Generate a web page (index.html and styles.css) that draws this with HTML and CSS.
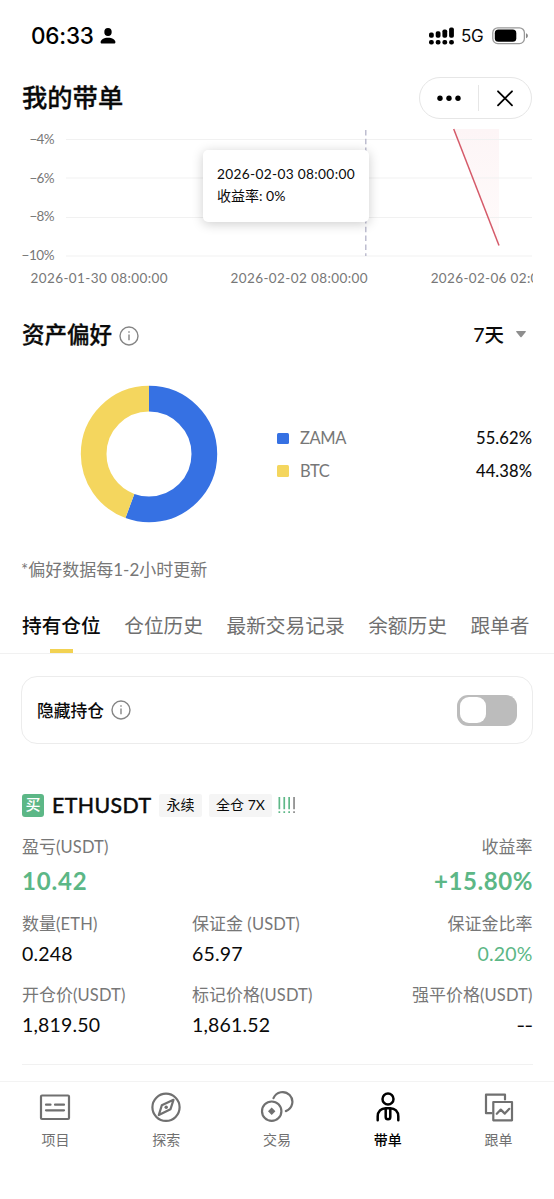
FILE: index.html
```html
<!DOCTYPE html>
<html lang="zh-CN">
<head>
<meta charset="utf-8">
<title>我的带单</title>
<link rel="stylesheet" href="styles.css">
</head>
<body>
<div class="screen">
  <header class="status">
    <span class="time">06:33</span>
    <svg class="person" width="16" height="16" viewBox="0 0 16 16"><ellipse cx="8" cy="4.1" rx="3.7" ry="4"/><path d="M.6 14.2C.6 11.500 3.800 9.700 8 9.700s7.400 1.800 7.400 4.500c0 .8-.5 1.300-1.400 1.300H2C1.100 15.500.6 15 .6 14.200z"/></svg>
    <span class="grow"></span>
    <svg width="26" height="18" viewBox="0 0 26 18"><g><rect x="0" y="5.600" width="4.800" height="5.200" rx="1.800"/><rect x="6.700" y="4.300" width="4.800" height="6.500" rx="1.800"/><rect x="13.400" y="2.400" width="4.800" height="8.400" rx="1.800"/><rect x="20.100" y="0.500" width="4.800" height="10.300" rx="1.800"/><rect x="0" y="13" width="4.800" height="4.600" rx="2"/><rect x="6.700" y="13" width="4.800" height="4.600" rx="2"/><rect x="13.400" y="13" width="4.800" height="4.600" rx="2"/><rect x="20.100" y="13" width="4.800" height="4.600" rx="2"/></g></svg>
    <span class="net">5G</span>
    <svg width="37" height="18" viewBox="0 0 37 18"><rect x=".8" y=".8" width="31.600" height="15.800" rx="5" fill="none" stroke="#999" stroke-width="1.300"/><rect x="2.800" y="2.600" width="21.500" height="12.200" rx="3.600"/><path d="M34 6.300c1.300.4 1.900 1.300 1.900 2.500s-.6 2.100-1.900 2.500z" fill="#888"/></svg>
  </header>

  <div class="titlebar">
    <h1>我的带单</h1>
    <div class="capsule">
      <svg width="58" height="40" viewBox="0 0 58 40"><circle cx="20" cy="20.300" r="2.700"/><circle cx="29" cy="20.300" r="2.700"/><circle cx="38" cy="20.300" r="2.700"/></svg>
      <i></i>
      <svg width="52" height="40" viewBox="0 0 52 40"><path d="M19 13.300l14 14M33 13.300l-14 14" fill="none" stroke="#000" stroke-width="1.800" stroke-linecap="round"/></svg>
    </div>
  </div>

  <section class="chart">
    <svg width="533" height="165" viewBox="0 125 533 165">
      <defs><linearGradient id="area" x1="0" y1="0" x2="0" y2="1"><stop offset="0" stop-color="#fdf5f6"/><stop offset="1" stop-color="#fffbfb"/></linearGradient></defs>
      <path d="M453.500 129H499V245z" fill="url(#area)"/>
      <path class="grid" d="M66 139.500H532M66 178H532M66 217.500H532M66 256H532"/>
      <path d="M365.800 130V256" stroke="#b4b3c9" stroke-width="1.300" stroke-dasharray="5.500 3.300"/>
      <path d="M453.700 129L499 245.500" stroke="#d55a69" stroke-width="1.500" fill="none"/>
      <g class="axis">
        <text x="29.500" y="143.800" textLength="25">−4%</text>
        <text x="29.500" y="182.600" textLength="25">−6%</text>
        <text x="29.500" y="221.200" textLength="25">−8%</text>
        <text x="21.500" y="260" textLength="33">−10%</text>
        <text x="30.500" y="282.500" textLength="137">2026-01-30 08:00:00</text>
        <text x="230.500" y="282.500" textLength="137">2026-02-02 08:00:00</text>
        <text x="430.700" y="282.500" textLength="136">2026-02-06 02:00:00</text>
      </g>
    </svg>
    <div class="tooltip"><div class="tip-date">2026-02-03 08:00:00</div><div>收益率: 0%</div></div>
  </section>

  <section class="section-head">
    <h2>资产偏好</h2>
    <svg class="info low" width="20" height="20" viewBox="0 0 20 20"><circle cx="10" cy="10" r="9"/><path d="M10 8.600v5.600M10 5.200v1.600"/></svg>
    <span class="grow"></span>
    <span class="range">7天</span>
    <svg width="10" height="7" viewBox="0 0 10 7"><path d="M.6 0h8.800q.8.200.3 1L5.600 6q-.6.700-1.200 0L.3 1Q-.2.200.6 0z" fill="#8e8e8e"/></svg>
  </section>

  <section class="assets">
    <svg width="138" height="138" viewBox="-69 -69 138 138">
      <circle class="slice blue" r="55.350" pathLength="100" stroke-dasharray="55.620 44.380" transform="rotate(-90)"/>
      <circle class="slice yellow" r="55.350" pathLength="100" stroke-dasharray="44.380 55.620" stroke-dashoffset="-55.620" transform="rotate(-90)"/>
    </svg>
    <div class="legend">
      <div><i class="bg-blue"></i><span>ZAMA</span><b>55.62%</b></div>
      <div><i class="bg-yellow"></i><span>BTC</span><b>44.38%</b></div>
    </div>
  </section>
  <p class="note">*偏好数据每1-2小时更新</p>

  <nav class="tabs">
    <span class="active">持有仓位</span><span>仓位历史</span><span>最新交易记录</span><span>余额历史</span><span>跟单者</span>
  </nav>

  <div class="hide-card">
    <span>隐藏持仓</span>
    <svg class="info" width="20" height="20" viewBox="0 0 20 20"><circle cx="10" cy="10" r="9"/><path d="M10 8.600v5.600M10 5.200v1.600"/></svg>
    <span class="grow"></span>
    <div class="toggle"><i></i></div>
  </div>

  <section class="position">
    <div class="pair">
      <span class="side">买</span><strong>ETHUSDT</strong><span class="tag">永续</span><span class="tag wide">全仓 7X</span>
      <svg width="18" height="17" viewBox="0 0 18 17"><g fill="#5fb888"><path d="M.5 0h1.700v12.300H.5zM5.400 0h1.700v12.300H5.400zM10.300 0H12v12.300h-1.700zM.5 14.300h1.700V16H.5zM5.400 14.300h1.700V16H5.400zM10.300 14.300H12V16h-1.700z"/></g><path d="M15.200 0h1.700v12.300h-1.700zM15.200 14.300h1.700V16h-1.700z" fill="#8b8b8b"/></svg>
    </div>
    <div class="metrics top">
      <div><label>盈亏<em>(USDT)</em></label><b class="green">10.42</b></div>
      <div></div>
      <div><label>收益率</label><b class="green pct">+15.80%</b></div>
    </div>
    <div class="metrics">
      <div><label>数量<em>(ETH)</em></label><span>0.248</span></div>
      <div><label>保证金 <em>(USDT)</em></label><span>65.97</span></div>
      <div><label>保证金比率</label><span class="green">0.20%</span></div>
    </div>
    <div class="metrics">
      <div><label>开仓价<em>(USDT)</em></label><span>1,819.50</span></div>
      <div><label>标记价格<em>(USDT)</em></label><span>1,861.52</span></div>
      <div><label>强平价格<em>(USDT)</em></label><span class="dashes">--</span></div>
    </div>
  </section>

  <footer class="bottom">
    <div><svg width="34" height="34" viewBox="0 0 34 34"><rect x="3" y="5.500" width="28" height="23.500" rx="1"/><path d="M8 14.700h4.500M17 14.700h9M8 20.300h18"/></svg>项目</div>
    <div><svg width="34" height="34" viewBox="0 0 34 34"><circle cx="17" cy="17.300" r="13.600"/><path d="M24.500 9.800L21.500 19.200 9.800 25l3-9.700z"/><circle class="solid" cx="17.200" cy="17.300" r="1.700"/></svg>探索</div>
    <div><svg width="34" height="34" viewBox="0 0 34 34"><circle cx="11.700" cy="21.200" r="9.700"/><path d="M13.500 8.200a9.800 9.800 0 1 1 12.400 12.900"/><path class="solid" d="M11.700 17.500l3.700 3.700-3.700 3.700L8 21.200z"/></svg>交易</div>
    <div class="active"><svg width="34" height="34" viewBox="0 0 34 34"><circle cx="17" cy="9" r="5.500"/><path d="M6.700 30.300v-3.800c0-5 3.500-8.300 8-8.300h4.600c4.500 0 8 3.300 8 8.300v3.800M14.700 18.500v8.400a2.300 2.300 0 0 0 4.600 0v-8.400"/></svg>带单</div>
    <div><svg width="34" height="34" viewBox="0 0 34 34"><path d="M9.500 23.200H4V4.700h19v4.700"/><rect x="11.300" y="12" width="18.700" height="18.300"/><path d="M14.800 23.800l4-4.200 4 4 4.500-4.800"/></svg>跟单</div>
  </footer>
</div>
</body>
</html>
```
FILE: styles.css
```css
* { box-sizing: border-box; }
body { margin: 0; background: #fff; color: #0a0a0a; font-family: Lato, "Noto Sans CJK SC", sans-serif; }
h1, h2, p { margin: 0; }
svg { display: block; flex: none; }
em { font-style: normal; }
.screen { width: 554px; height: 1199px; display: flex; flex-direction: column; overflow: hidden; }
.grow { flex: 1; }
.green { color: #5cb786; }

.status { height: 72px; padding: 0 25px 0 31px; display: flex; align-items: center; }
.time { font: 500 22.5px/30px Inter, sans-serif; width: 69px; letter-spacing: -.2px; color: #000; }
.net { font: 400 17px/24px Inter, sans-serif; width: 31px; margin-left: 6px; letter-spacing: -.3px; }

.titlebar { height: 53px; padding: 5px 22px 6px; display: flex; align-items: center; justify-content: space-between; }
h1 { font-size: 25.300px; line-height: 36px; font-weight: 500; margin-top: -1px; -webkit-text-stroke: .3px #0a0a0a; }
.capsule { width: 113px; height: 42px; border: 1px solid #e6e6e6; border-radius: 21px; display: flex; align-items: center; }
.capsule i { width: 1px; height: 26px; background: #e6e6e6; }

.chart { position: relative; width: 533px; height: 165px; overflow: hidden; }
.grid { stroke: #f1f1f1; stroke-width: 1; }
.axis { font-size: 13.500px; fill: #777; }
.tooltip { position: absolute; left: 203px; top: 25px; width: 166px; height: 72px; padding: 13px 14px; border-radius: 5px; background: #fff; box-shadow: 0 2px 12px rgba(0,0,0,.2); font-size: 14px; line-height: 22px; white-space: nowrap; }
.tip-date { font-size: 13.700px; letter-spacing: .33px; }

.section-head { height: 90px; padding: 0 28px 0 22px; display: flex; align-items: center; }
h2 { font-size: 22.500px; line-height: 32px; font-weight: 500; -webkit-text-stroke: .3px #0a0a0a; width: 97px; margin-top: 1px; white-space: nowrap; }
.info { margin-top: 1px; }
.info.low { margin-top: 3px; }
.info circle, .info path { fill: none; stroke: #858585; stroke-width: 1.400; }
.range { font-size: 19.500px; font-weight: 500; margin: -2px 12px 0 0; }

.assets { height: 148px; padding: 7px 22px 5px 80px; display: flex; align-items: center; }
.slice { fill: none; stroke-width: 25.700; }
.blue { stroke: #3671e3; } .yellow { stroke: #f4d65e; }
.bg-blue { background: #3671e3; } .bg-yellow { background: #f4d65e; }
.legend { flex: 1; margin: 1px 0 0 59px; }
.legend div { height: 32.500px; display: flex; align-items: center; font-size: 16.500px; }
.legend i { width: 11.500px; height: 11.500px; border-radius: 1.500px; margin-right: 11.500px; }
.legend span { flex: 1; color: #777; letter-spacing: -.4px; }
.legend b { font-weight: 400; letter-spacing: .1px; -webkit-text-stroke: .1px #0a0a0a; }
.note { height: 64px; flex: none; padding: 28px 22px 0 21px; font-size: 17px; line-height: 30px; color: #777; }

.tabs { height: 63px; flex: none; border-bottom: 1px solid #f1f1f1; padding: 17px 0 0 22px; display: flex; gap: 23.500px; font-size: 19.700px; line-height: 36px; color: #6f6f6f; white-space: nowrap; }
.tabs .active { color: #0a0a0a; font-weight: 500; display: flex; flex-direction: column; align-items: center; }
.tabs .active::after { content: ""; width: 23px; height: 4px; margin-top: 5px; background: #f2d252; }

.hide-card { flex: none; height: 68px; margin: 22px 21px 0; padding: 0 15px; border: 1.500px solid #ececec; border-radius: 16px; display: flex; align-items: center; font-size: 16.800px; font-weight: 500; gap: 7px; }
.hide-card .info { margin-top: 0; }
.toggle { width: 60px; height: 31px; border-radius: 11px; background: #bcbcbc; padding: 2.500px; }
.toggle i { display: block; width: 26px; height: 26px; border-radius: 9px; background: #fff; }

.position { flex: none; height: 321px; margin: 0 21.500px 0 22px; padding-top: 49px; border-bottom: 1px solid #f1f1f1; }
.pair { height: 24px; display: flex; align-items: center; white-space: nowrap; }
.side { width: 22px; height: 23px; border-radius: 3px; background: #5cb786; color: #fff; font-size: 15px; line-height: 21px; text-align: center; margin-right: 8px; font-weight: 500; }
strong { width: 107px; font-size: 21.300px; font-weight: 400; letter-spacing: .45px; margin-top: -1px; -webkit-text-stroke: .5px #0a0a0a; }
.tag { height: 23px; width: 43px; background: #f5f5f5; border-radius: 2px; font-size: 14px; line-height: 22px; text-align: center; }
.tag.wide { width: 63px; margin: 0 6px 0 7px; }
.metrics { display: grid; grid-template-columns: 170px 170px 1fr; height: 71px; padding-top: 5px; white-space: nowrap; }
.metrics.top { height: 89px; padding-top: 17px; }
.metrics label { display: block; font-size: 17px; line-height: 26px; color: #777; }
.metrics em { font-size: 16.500px; letter-spacing: .15px; }
.metrics span { display: block; font-size: 19.500px; line-height: 34px; margin-top: 0; letter-spacing: .15px; }
.metrics b { display: block; font-size: 24px; line-height: 34px; margin-top: 4px; letter-spacing: .8px; }
.metrics .pct { letter-spacing: .6px; margin-right: -.6px; }
.metrics > :last-child { text-align: right; }
.metrics .dashes { font-family: Inter, sans-serif; font-size: 18.500px; letter-spacing: -.5px; }

.bottom { flex: none; margin-top: 16px; height: 118px; border-top: 1px solid #f3f3f3; padding-top: 8px; display: grid; grid-template-columns: repeat(5, 1fr); font-size: 14px; line-height: 24px; color: #707070; }
.bottom div { display: flex; flex-direction: column; align-items: center; gap: 4px; }
.bottom svg { fill: none; stroke: #707070; stroke-width: 2.200; stroke-linejoin: round; stroke-linecap: round; }
.bottom .solid { fill: #707070; stroke: none; }
.bottom .active { color: #000; font-weight: 500; }
.bottom .active svg { stroke: #000; stroke-width: 2.500; }
```
